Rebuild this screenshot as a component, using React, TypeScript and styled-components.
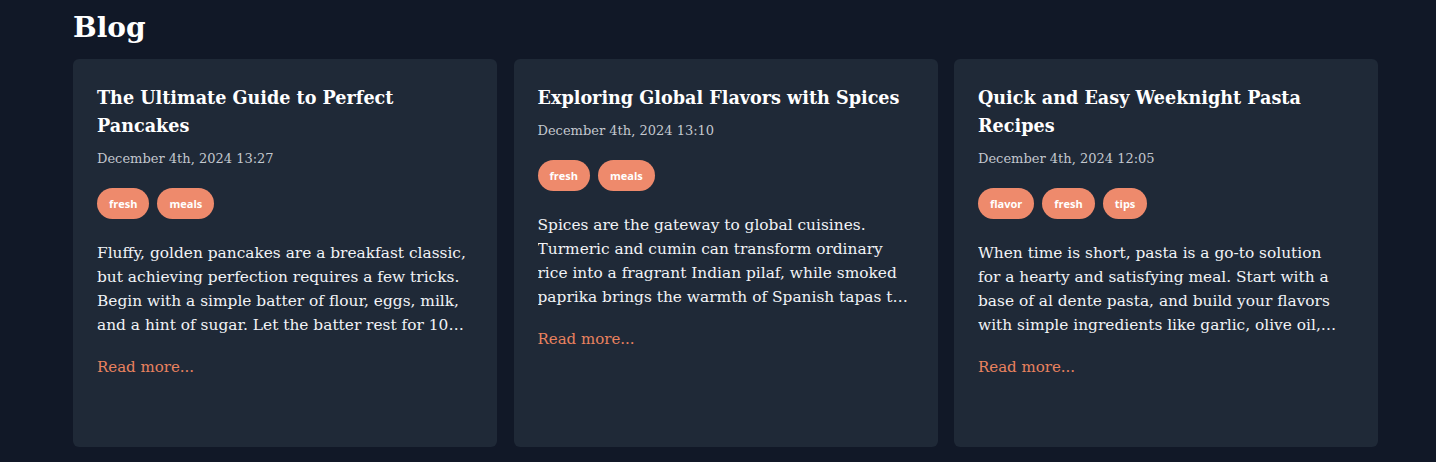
import React from "react";
import styled, { createGlobalStyle } from "styled-components";

const GlobalStyle = createGlobalStyle`
  html, body {
    margin: 0;
    padding: 0;
    background: #111827;
  }
  body {
    font-family: "DejaVu Serif", "Liberation Serif", serif;
    color: #ffffff;
  }
`;

const Page = styled.main`
  min-height: 462px;
  box-sizing: border-box;
  padding: 8px 58px 0 73px;
  background: #111827;
`;

const Heading = styled.h1`
  margin: 0 0 11px;
  font-size: 28px;
  line-height: 40px;
  font-weight: 700;
  color: #ffffff;
`;

const Grid = styled.div`
  display: grid;
  grid-template-columns: repeat(3, 424px);
  column-gap: 16.5px;
`;

const Card = styled.article`
  box-sizing: border-box;
  height: 388px;
  padding: 25px 24px 24px;
  border-radius: 6px;
  background: #1f2937;
  display: flex;
  flex-direction: column;
`;

const Title = styled.h2`
  margin: 0;
  font-size: 17.6px;
  line-height: 28px;
  font-weight: 700;
  color: #ffffff;
`;

const DateLine = styled.div`
  margin-top: 9px;
  font-size: 13px;
  line-height: 20px;
  color: #c3c7ce;
`;

const Tags = styled.div`
  display: flex;
  gap: 8px;
  margin-top: 19px;
`;

const Tag = styled.span`
  display: inline-flex;
  align-items: center;
  height: 31px;
  padding: 0 12px;
  border-radius: 999px;
  background: #ee8a6c;
  color: #ffffff;
  font-family: "Open Sans", "Noto Sans", sans-serif;
  font-size: 11px;
  font-weight: 700;
`;

const Excerpt = styled.p`
  margin: 22px 0 0;
  font-size: 15.4px;
  line-height: 24px;
  color: #f1f3f6;
  display: -webkit-box;
  -webkit-line-clamp: 4;
  -webkit-box-orient: vertical;
  overflow: hidden;
`;

const ReadMore = styled.a`
  margin-top: 18px;
  font-size: 15px;
  line-height: 24px;
  color: #e9825f;
  text-decoration: none;
  cursor: pointer;
`;

type Post = {
  title: string;
  date: string;
  tags: string[];
  excerpt: string;
};

const posts: Post[] = [
  {
    title: "The Ultimate Guide to Perfect Pancakes",
    date: "December 4th, 2024 13:27",
    tags: ["fresh", "meals"],
    excerpt:
      "Fluffy, golden pancakes are a breakfast classic, but achieving perfection requires a few tricks. Begin with a simple batter of flour, eggs, milk, and a hint of sugar. Let the batter rest for 10 minutes so the gluten can relax and the pancakes turn out light and airy.",
  },
  {
    title: "Exploring Global Flavors with Spices",
    date: "December 4th, 2024 13:10",
    tags: ["fresh", "meals"],
    excerpt:
      "Spices are the gateway to global cuisines. Turmeric and cumin can transform ordinary rice into a fragrant Indian pilaf, while smoked paprika brings the warmth of Spanish tapas to any simple weeknight dish you cook.",
  },
  {
    title: "Quick and Easy Weeknight Pasta Recipes",
    date: "December 4th, 2024 12:05",
    tags: ["flavor", "fresh", "tips"],
    excerpt:
      "When time is short, pasta is a go-to solution for\u00A0a hearty and satisfying meal. Start with a base of al dente pasta, and build your flavors with simple ingredients like garlic, olive oil, and fresh herbs from the garden.",
  },
];

export default function App() {
  return (
    <>
      <GlobalStyle />
      <Page>
        <Heading>Blog</Heading>
        <Grid>
          {posts.map((p) => (
            <Card key={p.title}>
              <Title>{p.title}</Title>
              <DateLine>{p.date}</DateLine>
              <Tags>
                {p.tags.map((t) => (
                  <Tag key={t}>{t}</Tag>
                ))}
              </Tags>
              <Excerpt>{p.excerpt}</Excerpt>
              <ReadMore>Read more...</ReadMore>
            </Card>
          ))}
        </Grid>
      </Page>
    </>
  );
}
